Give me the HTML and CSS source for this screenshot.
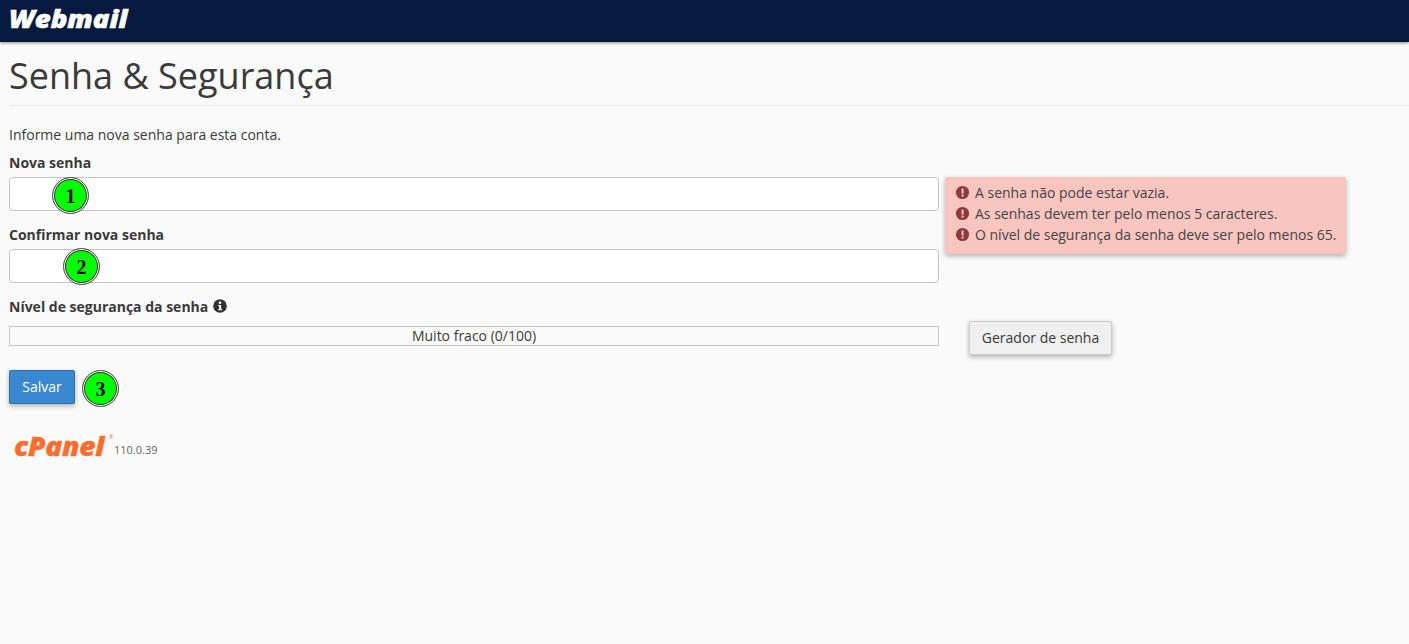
FILE: index.html
```html
<!DOCTYPE html>
<html lang="pt">
<head>
<meta charset="utf-8">
<title>Senha &amp; Segurança</title>
<link rel="stylesheet" href="styles.css">
</head>
<body>
<header class="topbar"><span class="webmail-logo">Webmail</span></header>
<main class="page">
  <h1 class="title">Senha &amp; Segurança</h1>
  <p class="intro">Informe uma nova senha para esta conta.</p>
  <div class="form-grid">
    <div class="fields">
      <label class="label">Nova senha</label>
      <div class="input-wrap"><div class="input"></div><span class="marker m1">1</span></div>
      <label class="label label-next">Confirmar nova senha</label>
      <div class="input-wrap"><div class="input"></div><span class="marker m2">2</span></div>
    </div>
    <div class="alert">
      <div class="alert-line"><svg class="ico" viewBox="0 0 16 16"><circle cx="8" cy="8" r="7" fill="#8c3a3c"/><rect x="7" y="3.6" width="2.2" height="5.6" rx=".5" fill="#f8c5c1"/><rect x="7" y="10.2" width="2.2" height="2.2" rx=".5" fill="#f8c5c1"/></svg>A senha não pode estar vazia.</div>
      <div class="alert-line"><svg class="ico" viewBox="0 0 16 16"><circle cx="8" cy="8" r="7" fill="#8c3a3c"/><rect x="7" y="3.6" width="2.2" height="5.6" rx=".5" fill="#f8c5c1"/><rect x="7" y="10.2" width="2.2" height="2.2" rx=".5" fill="#f8c5c1"/></svg>As senhas devem ter pelo menos 5 caracteres.</div>
      <div class="alert-line"><svg class="ico" viewBox="0 0 16 16"><circle cx="8" cy="8" r="7" fill="#8c3a3c"/><rect x="7" y="3.6" width="2.2" height="5.6" rx=".5" fill="#f8c5c1"/><rect x="7" y="10.2" width="2.2" height="2.2" rx=".5" fill="#f8c5c1"/></svg>O nível de segurança da senha deve ser pelo menos 65.</div>
    </div>
  </div>
  <div class="label strength-label">Nível de segurança da senha <svg class="info" viewBox="0 0 14 14"><circle cx="7" cy="7" r="6.8" fill="#333"/><circle cx="7" cy="3.7" r="1.3" fill="#fafafa"/><path d="M5.2 5.9h2.9v4.1h1v1.3H5.2V10h1V7.2h-1z" fill="#fafafa"/></svg></div>
  <div class="strength-row">
    <div class="meter">Muito fraco (0/100)</div>
    <button class="btn btn-default" type="button">Gerador de senha</button>
  </div>
  <div class="save-row">
    <button class="btn btn-primary" type="button">Salvar</button>
    <span class="marker m3">3</span>
  </div>
  <footer class="footer"><span class="cpanel-logo">cPanel<sup class="reg">®</sup></span><span class="version">110.0.39</span></footer>
</main>
</body>
</html>
```
FILE: styles.css
```css
* { box-sizing: border-box; }
html, body { margin: 0; height: 100%; }
body {
  background: #fafafa;
  color: #3a3a3a;
  font-family: "Open Sans", sans-serif;
  font-size: 14px;
  line-height: 20px;
  overflow: hidden;
}
.topbar {
  height: 42px;
  background: #061a40;
  box-shadow: 0 1px 3px rgba(0,0,0,.45);
  padding-left: 9px;
  display: flex;
  align-items: flex-start;
}
.webmail-logo {
  font-family: "Open Sans", sans-serif;
  font-weight: 800;
  font-style: italic;
  font-size: 25px;
  line-height: 36px;
  color: #fff;
  -webkit-text-stroke: .6px #fff;
  display: inline-block;
  transform: scaleX(1.1);
  transform-origin: left center;
}
.page { padding-left: 9px; }
.title {
  margin: 0;
  height: 64px;
  border-bottom: 1px solid #eaeaea;
  font-weight: 400;
  font-size: 36px;
  line-height: 68px;
  color: #3a3a3a;
}
.intro { margin: 19px 0 0; line-height: 20px; }
.form-grid {
  display: flex;
  align-items: flex-start;
  margin-top: 8px;
}
.fields { width: 930px; flex: none; }
.label { display: block; font-weight: 700; line-height: 20px; }
.label-next { margin-top: 14px; }
.input-wrap { position: relative; margin-top: 4px; }
.input {
  height: 34px;
  background: #fff;
  border: 1px solid #c4c4c4;
  border-radius: 4px;
}
.alert {
  margin: 24px 0 0 6px;
  width: 401px;
  height: 77px;
  padding: 5px 10px;
  background: #f8c5c1;
  border-radius: 2px;
  box-shadow: 0 2px 5px rgba(0,0,0,.3);
  color: #444;
  line-height: 21px;
}
.alert-line { display: flex; align-items: center; white-space: nowrap; }
.ico { width: 15px; height: 15px; margin-right: 5px; flex: none; }
.strength-label { margin-top: 14px; }
.info { width: 14px; height: 14px; vertical-align: -1px; margin-left: 1px; }
.strength-row { display: flex; align-items: flex-start; margin-top: 4px; }
.meter {
  width: 930px;
  height: 20px;
  margin-top: 5px;
  border: 1px solid #c8c8c8;
  text-align: center;
  line-height: 18px;
  flex: none;
}
.btn {
  font-family: "Open Sans", sans-serif;
  font-size: 14px;
  line-height: 20px;
  border-radius: 2px;
  height: 34px;
  cursor: pointer;
}
.btn-default {
  margin-left: 30px;
  width: 143px;
  padding: 0;
  background: #f0f0f0;
  border: 1px solid #ccc;
  color: #3a3a3a;
  box-shadow: 0 2px 5px rgba(0,0,0,.3);
}
.save-row { display: flex; align-items: center; margin-top: 15px; position: relative; height: 34px; }
.btn-primary {
  width: 66px;
  padding: 0;
  background: #3a88cf;
  border: 1px solid #2f6ea8;
  color: #fff;
  box-shadow: 0 2px 5px rgba(0,0,0,.3);
}
.marker {
  position: absolute;
  width: 37px;
  height: 37px;
  border-radius: 50%;
  background: #00ff00;
  border: 1px solid #555;
  box-shadow: inset 0 0 0 1px #fff, inset 0 0 0 2px #333;
  font-family: "Liberation Serif", serif;
  font-weight: 700;
  font-size: 20px;
  line-height: 37px;
  text-align: center;
  color: #000;
}
.m1 { left: 43px; top: 0; }
.m2 { left: 54px; top: -1px; }
.m3 { left: 73px; top: 0; }
.footer { display: flex; align-items: flex-end; margin-top: 26px; padding-left: 5px; height: 30px; }
.cpanel-logo {
  font-family: "Open Sans", sans-serif;
  font-weight: 800;
  font-style: italic;
  font-size: 26px;
  line-height: 28px;
  letter-spacing: -.2px;
  color: #ff6c2c;
  -webkit-text-stroke: .3px #ff6c2c;
  position: relative;
  width: 100px;
  display: inline-block;
  transform: scaleX(1.08);
  transform-origin: left center;
  white-space: nowrap;
}
.reg {
  position: absolute;
  top: 2px;
  left: 88px;
  font-size: 5px;
  line-height: 6px;
  font-style: normal;
  font-weight: 400;
  -webkit-text-stroke: 0;
}
.version { font-size: 11px; line-height: 16px; color: #666; margin-left: 0; padding-bottom: 2px; }
```
